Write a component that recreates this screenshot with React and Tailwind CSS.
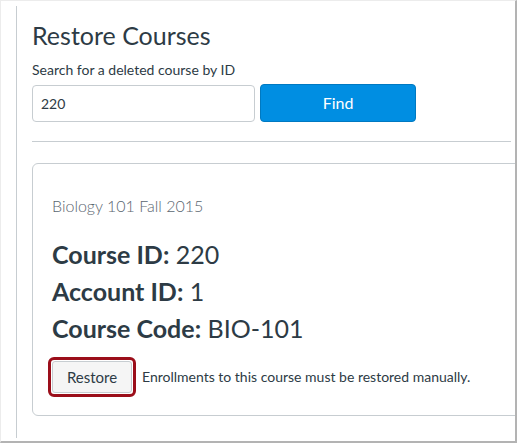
import React from "react";

const FONT = "font-['Lato','Noto_Sans',sans-serif]";

const CourseField = ({ label, value }) => (
  <div className="text-[25px] leading-[37px] text-[#2d3b45]">
    <span className="font-bold">{label}:</span> {value}
  </div>
);

const RestoreCourses = () => {
  return (
    <div className="w-[518px] h-[445px] bg-white overflow-hidden">
      {/* screenshot frame */}
      <div
        className={`w-[517px] h-[443px] border-l border-t border-[#ececec] border-r-2 border-b-2 border-r-[#b3b3b3] border-b-[#b3b3b3] pl-[15px] pt-[5px] ${FONT}`}
      >
        <div className="h-[432px] border-l border-[#c7cdd1] pl-[15px] pt-[12px] pr-[4px] overflow-hidden">
          <h1 className="text-[25px] leading-[34px] text-[#2d3b45] font-normal">
            Restore Courses
          </h1>
          <label className="block mt-[8px] text-[14px] leading-[20px] text-[#2d3b45]">
            Search for a deleted course by ID
          </label>
          <div className="flex gap-[5px] mt-[4px]">
            <input
              className="w-[223px] h-[37px] mt-[1px] border border-[#c7cdd1] rounded-[4px] px-[8px] text-[14px] text-[#2d3b45] outline-none"
              defaultValue="220"
            />
            <button className="w-[156px] h-[38px] bg-[#008ee2] border border-[#0079c1] rounded-[4px] text-white text-[16px]">
              Find
            </button>
          </div>
          <hr className="mt-[19px] border-t border-[#c7cdd1] w-[479px]" />

          {/* deleted course result */}
          <div className="mt-[21px] w-[490px] h-[253px] border border-[#c7cdd1] rounded-[6px] pl-[19px] pt-[32px]">
            <p className="text-[16px] leading-[20px] text-[#5a6670] font-light">
              Biology 101 Fall 2015
            </p>
            <div className="mt-[20px]">
              <CourseField label="Course ID" value="220" />
              <CourseField label="Account ID" value="1" />
              <CourseField label="Course Code" value="BIO-101" />
            </div>
            <div className="flex items-center gap-[6px] mt-[10px] -ml-[4px]">
              <div className="border-[3px] border-[#9b0e1a] rounded-[6px] p-[1px]">
                <button className="w-[80px] h-[32px] bg-[#f5f5f5] border border-[#c7cdd1] rounded-[3px] text-[15px] text-[#2d3b45]">
                  Restore
                </button>
              </div>
              <span className="text-[14px] text-[#2d3b45] -mt-[2px]">
                Enrollments to this course must be restored manually.
              </span>
            </div>
          </div>
        </div>
      </div>
    </div>
  );
};

export default function App() {
  return <RestoreCourses />;
}
